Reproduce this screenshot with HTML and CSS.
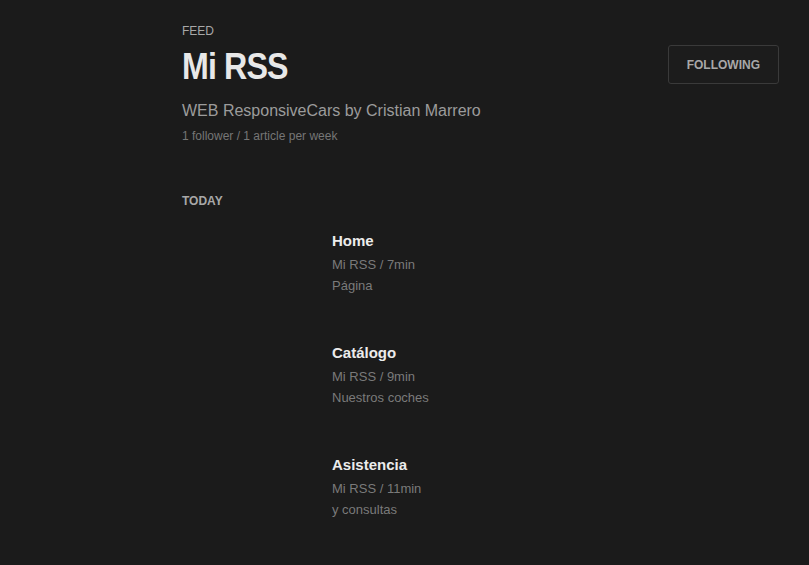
FILE: index.html
```html
<!DOCTYPE html>
<html lang="es">
<head>
<meta charset="utf-8">
<title>Mi RSS</title>
<link rel="stylesheet" href="styles.css">
</head>
<body>
<main class="page">
  <header class="feed-header">
    <div class="feed-info">
      <div class="eyebrow">FEED</div>
      <h1 class="feed-title"><span class="feed-title-text">Mi RSS</span></h1>
      <p class="feed-desc">WEB ResponsiveCars by Cristian Marrero</p>
      <p class="feed-stats">1 follower / 1 article per week</p>
    </div>
    <button class="follow-btn">FOLLOWING</button>
  </header>

  <section class="day">
    <h2 class="day-label">TODAY</h2>
    <div class="articles">
      <article class="article">
        <div class="thumb"></div>
        <div class="article-body">
          <h3 class="article-title">Home</h3>
          <div class="article-meta">Mi RSS / 7min</div>
          <div class="article-desc">Página</div>
        </div>
      </article>
      <article class="article">
        <div class="thumb"></div>
        <div class="article-body">
          <h3 class="article-title">Catálogo</h3>
          <div class="article-meta">Mi RSS / 9min</div>
          <div class="article-desc">Nuestros coches</div>
        </div>
      </article>
      <article class="article">
        <div class="thumb"></div>
        <div class="article-body">
          <h3 class="article-title">Asistencia</h3>
          <div class="article-meta">Mi RSS / 11min</div>
          <div class="article-desc">y consultas</div>
        </div>
      </article>
    </div>
  </section>
</main>
</body>
</html>
```
FILE: styles.css
```css
html, body {
  margin: 0;
  padding: 0;
  background: #1b1b1b;
  font-family: "Liberation Sans", Arial, sans-serif;
}

.page {
  padding: 23px 30px 0 182px;
}

.feed-header {
  display: flex;
  justify-content: space-between;
  align-items: flex-start;
}

.eyebrow {
  font-size: 12px;
  line-height: 16px;
  color: #a8a8a8;
}

.feed-title {
  margin: 8px 0 0;
  font-size: 37px;
  line-height: 40px;
  font-weight: 700;
  letter-spacing: -1px;
  color: #e8e8e8;
}

.feed-title-text {
  display: inline-block;
  transform: scaleX(0.87);
  transform-origin: left center;
}

.feed-desc {
  margin: 14px 0 0;
  font-size: 16px;
  line-height: 20px;
  color: #9c9c9c;
}

.feed-stats {
  margin: 7px 0 0;
  font-size: 12px;
  line-height: 16px;
  color: #767676;
}

.follow-btn {
  margin-top: 22px;
  padding: 12px 18px 11px;
  border: 1px solid #3a3a3a;
  border-radius: 3px;
  background: #1c1c1c;
  color: #a8a8a8;
  font-family: "Liberation Sans", Arial, sans-serif;
  font-size: 12px;
  line-height: 14px;
  font-weight: 700;
}

.day {
  margin-top: 49px;
}

.day-label {
  margin: 0;
  font-size: 12px;
  line-height: 16px;
  font-weight: 700;
  color: #a8a8a8;
}

.articles {
  margin-top: 22px;
  display: flex;
  flex-direction: column;
  gap: 47px;
}

.article {
  display: flex;
}

.thumb {
  width: 150px;
  flex: none;
}

.article-title {
  margin: 0 0 3px;
  font-size: 15px;
  line-height: 20px;
  font-weight: 700;
  color: #ececec;
}

.article-meta,
.article-desc {
  font-size: 13px;
  line-height: 21px;
  color: #7a7a7a;
}
```
